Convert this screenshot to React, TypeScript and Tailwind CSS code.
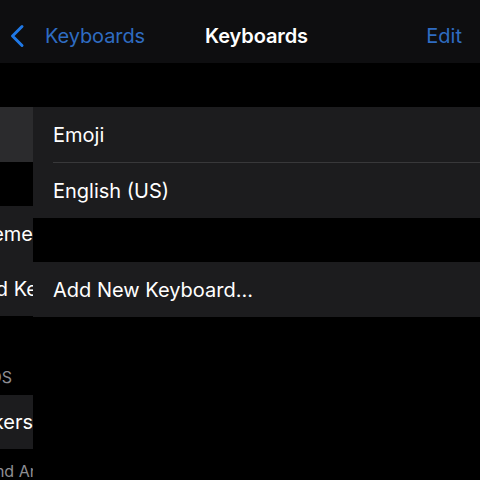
export default function App() {
  return (
    <div
      className="w-[480px] h-[480px] bg-black text-white overflow-hidden flex flex-col"
      style={{ fontFamily: "Inter, 'Noto Sans', sans-serif" }}
    >
      {/* Nav bar */}
      <header className="h-[63px] shrink-0 bg-[#0e0e10] flex items-center pt-[9px]">
        <svg width="16" height="24" viewBox="0 0 16 24" className="ml-[9px] shrink-0" fill="none">
          <path d="M13 2.5 L3.5 12 L13 21.5" stroke="#1f78e6" strokeWidth="3" strokeLinecap="round" strokeLinejoin="round" />
        </svg>
        <span className="ml-[20px] text-[20px] text-[#2f6cc2] tracking-[-0.1px]">Keyboards</span>
        <span className="ml-[60px] text-[20px] font-semibold tracking-[-0.1px]">Keyboards</span>
        <span className="flex-1" />
        <span className="mr-[18px] text-[20px] text-[#2f6cc2]">Edit</span>
      </header>

      <div className="flex flex-1">
        {/* Previous screen, sliding out */}
        <div className="w-[33px] shrink-0 overflow-hidden flex flex-col pt-[44px]">
          <div className="h-[55px] bg-[#2b2b2d]" />
          <div className="h-[44px]" />
          <div className="h-[55px] bg-[#1c1c1e] flex items-center justify-end whitespace-nowrap text-[20px]">
            Text Replaceme
          </div>
          <div className="h-[55px] bg-[#1c1c1e] flex items-center justify-end whitespace-nowrap text-[20px]">
            <span className="mr-[-5px]">One Handed Ke</span>
          </div>
          <div className="h-[47px]" />
          <div className="h-[27px] flex items-center justify-end whitespace-nowrap text-[16px] text-[#8e8e93]">
            <span className="mr-[21px]">KEYBOARDS</span>
          </div>
          <div className="h-[5px]" />
          <div className="h-[54px] bg-[#1c1c1e] flex items-center justify-end whitespace-nowrap text-[20px]">
            Memoji Stickers
          </div>
          <div className="h-[40px] flex items-center justify-end whitespace-nowrap text-[16px] text-[#8e8e93] pt-[4px]">
            <span className="mr-[-10px]">Memoji and Ani</span>
          </div>
        </div>

        {/* Keyboards list */}
        <div className="flex-1 flex flex-col pt-[44px]">
          <div className="bg-[#1c1c1e]">
            <div className="h-[55px] flex items-center pl-[20px] text-[20px]">Emoji</div>
            <div className="ml-[20px] h-px bg-[#38383a]" />
            <div className="h-[55px] flex items-center pl-[20px] text-[20px]">English (US)</div>
          </div>
          <div className="h-[44px]" />
          <div className="bg-[#1c1c1e] h-[55px] flex items-center pl-[20px] text-[20px]">
            Add New Keyboard...
          </div>
        </div>
      </div>
    </div>
  );
}
